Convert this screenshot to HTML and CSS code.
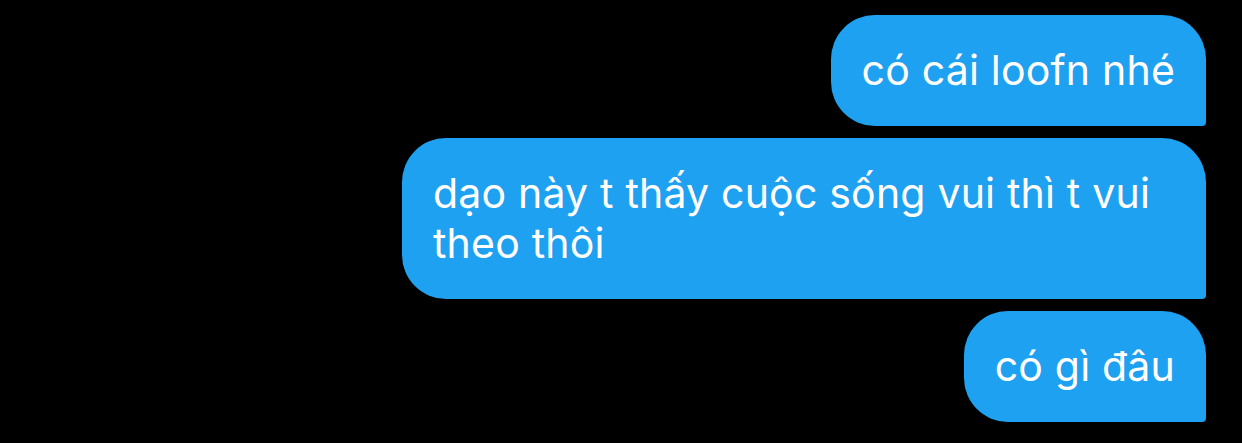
FILE: index.html
```html
<!doctype html>
<html lang="vi">
<head>
  <meta charset="utf-8"/>
  <title>Tin nhắn</title>
  <link rel="stylesheet" href="styles.css">
</head>
<body>
  <main class="thread">
    <p class="bubble">có cái loofn nhé</p>
    <p class="bubble">dạo này t thấy cuộc sống vui thì t vui theo thôi</p>
    <p class="bubble">có gì đâu</p>
  </main>
</body>
</html>
```

FILE: styles.css
```css
:root {
  --bubble-blue: #1fa1f1;
  --bubble-radius: 44px;
}
* { margin: 0; padding: 0; box-sizing: border-box; }
html, body { height: 100%; background-color: #000; overflow: hidden; }
body { font-family: Inter, "Noto Sans", sans-serif; }
.thread {
  display: flex; flex-direction: column; align-items: flex-end;
  gap: 12px;
  padding: 15px 36px 0 0;
}
.bubble {
  max-width: 804px;
  padding: 30px 31px 31px 31px;
  background-color: var(--bubble-blue);
  color: #fff;
  font-size: 41px; line-height: 50px; letter-spacing: 0.2px;
  border-radius: var(--bubble-radius) var(--bubble-radius) 4px var(--bubble-radius);
}
```
